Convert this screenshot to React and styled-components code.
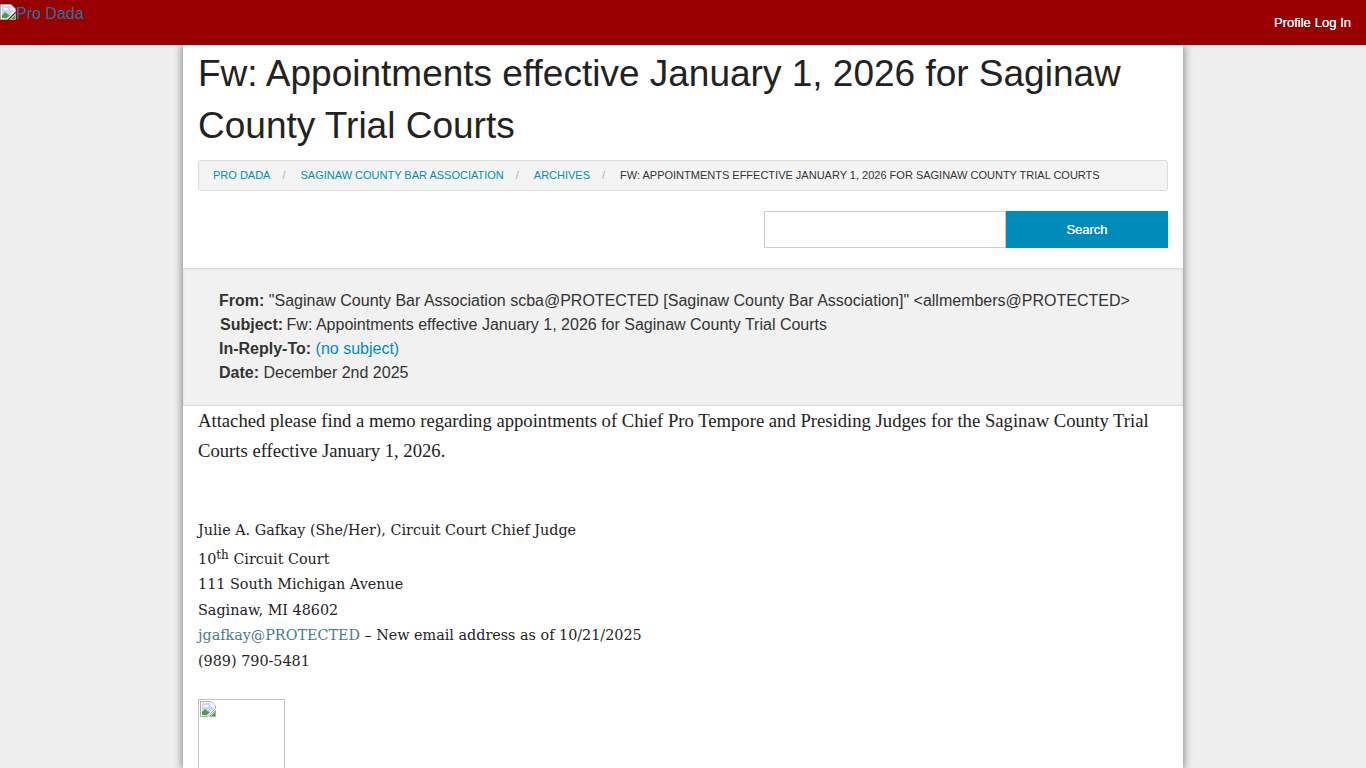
import React from 'react';
import styled, { createGlobalStyle } from 'styled-components';

const GlobalStyle = createGlobalStyle`
	html, body {
		margin: 0;
		padding: 0;
		height: 768px;
		overflow: hidden;
		background: #eeeeee;
		font-family: "Liberation Sans", Arial, sans-serif;
		color: #222222;
	}
	* {
		box-sizing: border-box;
	}
`;

const TopBar = styled.div`
	display: flex;
	justify-content: space-between;
	height: 45px;
	background: #990000;
	position: relative;
	z-index: 2;
`;
const LogoLink = styled.a`
	display: flex;
	align-items: flex-start;
	color: #2f6f9f;
	font-size: 16px;
	line-height: 18px;
	padding-top: 4px;
	text-decoration: none;
`;
const LogoText = styled.span`
	margin-top: 1px;
`;
const NavLinks = styled.div`
	display: flex;
	align-items: center;
	gap: 4px;
	padding-right: 15px;
	color: #ffffff;
	font-size: 13px;
	font-weight: normal;
`;
const NavLink = styled.a`
	color: #ffffff;
	text-shadow: 0 0 0.4px #ffffff;
`;
const Page = styled.div`
	width: 1000px;
	height: 723px;
	margin: 0 auto;
	background: #ffffff;
	box-shadow: 0 0 8px 1px rgba(0, 0, 0, 0.45);
	overflow: hidden;
`;
const Head = styled.div`
	padding: 3px 15px 20px;
`;
const Title = styled.h1`
	margin: 0 0 8px;
	font-size: 37px;
	font-weight: 400;
	line-height: 52px;
	color: #222222;
`;
const Crumbs = styled.ul`
	display: flex;
	align-items: center;
	height: 31px;
	margin: 0 0 20px;
	padding: 0 14px 2px;
	list-style: none;
	background: #f4f4f4;
	border: 1px solid #dcdcdc;
	border-radius: 3px;
	font-size: 11px;
	text-transform: uppercase;
`;
const Crumb = styled.li`
	color: ${(props) => (props.current ? '#333333' : '#008cba')};
`;
const Slash = styled.li`
	width: 30px;
	padding-right: 3px;
	text-align: center;
	color: #aaaaaa;
`;
const SearchRow = styled.div`
	display: flex;
	justify-content: flex-end;
`;
const SearchInput = styled.input`
	width: 242px;
	height: 37px;
	border: 1px solid #cccccc;
	outline: none;
	background: #ffffff;
`;
const SearchButton = styled.a`
	display: flex;
	align-items: center;
	justify-content: center;
	width: 162px;
	height: 37px;
	background: #008cba;
	color: #ffffff;
	font-size: 13px;
	text-shadow: 0 0 0.4px #ffffff;
`;
const Meta = styled.div`
	padding: 20px 36px 21px;
	background: #f1f1f1;
	border-top: 1px solid #dddddd;
	border-bottom: 1px solid #dddddd;
	box-shadow: inset 0 0 3px rgba(0, 0, 0, 0.1);
	font-size: 16px;
	line-height: 24px;
	color: #333333;
	height: 138px;
`;
const MetaLine = styled.div`
	padding-left: ${(props) => props.nudge || 0}px;
	white-space: nowrap;
`;
const MetaLabel = styled.strong`
	margin-right: ${(props) => props.tight || 0}px;
`;
const MetaLink = styled.a`
	color: #008cba;
`;
const Body = styled.div`
	padding: 0 15px;
`;
const Memo = styled.p`
	margin: 0 0 52px;
	font-family: "Liberation Serif", "Times New Roman", serif;
	font-size: 18.67px;
	line-height: 30px;
	color: #222222;
`;
const Signature = styled.div`
	font-family: "DejaVu Serif", serif;
	font-size: 14.35px;
	line-height: 25.6px;
	color: #222222;
`;
const SigLine = styled.div`
	padding-top: ${(props) => (props.raised ? 3 : 0)}px;
	white-space: nowrap;
`;
const Sup = styled.sup`
	font-size: 12px;
	line-height: 1;
	vertical-align: 5px;
`;
const SigLink = styled.a`
	color: #4a7a8c;
`;
const BrokenBox = styled.div`
	width: 87px;
	height: 100px;
	margin-top: 24px;
	padding: 1px;
	border: 1px solid #c0c0c0;
`;

// the browser's missing-image glyph
const BrokenImage = () => (
	<svg width="16" height="16" viewBox="0 0 16 16">
		<path d="M0.5 0.5H11l4.5 4.5v2.5l-8 8h-7z" fill="#ffffff" stroke="#a9a9a9" />
		<path d="M2 2h8.5v4H14v1l-7 7H2z" fill="#c3d6f5" />
		<ellipse cx="6" cy="5" rx="2.5" ry="1.2" fill="#ffffff" />
		<path d="M2 14v-3l3-3 3 2.5 2 0.5-3.5 3.5z" fill="#4fa044" />
		<path d="M9.5 15.5l6-6v6z" fill="#ffffff" stroke="#a9a9a9" />
		<path d="M11 15l4-4v4z" fill="#4fa044" />
	</svg>
);

export default function App() {
	return (
		<>
			<GlobalStyle />
			<TopBar>
				<LogoLink>
					<BrokenImage />
					<LogoText>Pro Dada</LogoText>
				</LogoLink>
				<NavLinks>
					<NavLink>Profile</NavLink>
					<NavLink>Log In</NavLink>
				</NavLinks>
			</TopBar>
			<Page>
				<Head>
					<Title>Fw: Appointments effective January 1, 2026 for Saginaw County Trial Courts</Title>
					<Crumbs>
						<Crumb>Pro Dada</Crumb>
						<Slash>/</Slash>
						<Crumb>Saginaw County Bar Association</Crumb>
						<Slash>/</Slash>
						<Crumb>Archives</Crumb>
						<Slash>/</Slash>
						<Crumb current>Fw: Appointments effective January 1, 2026 for Saginaw County Trial Courts</Crumb>
					</Crumbs>
					<SearchRow>
						<SearchInput />
						<SearchButton>Search</SearchButton>
					</SearchRow>
				</Head>
				<Meta>
					<MetaLine><MetaLabel>From:</MetaLabel> "Saginaw County Bar Association scba@PROTECTED [Saginaw County Bar Association]" &lt;allmembers@PROTECTED&gt;</MetaLine>
					<MetaLine nudge={1}><MetaLabel tight={-1}>Subject:</MetaLabel> Fw: Appointments effective January 1, 2026 for Saginaw County Trial Courts</MetaLine>
					<MetaLine><MetaLabel>In-Reply-To:</MetaLabel> <MetaLink>(no subject)</MetaLink></MetaLine>
					<MetaLine><MetaLabel>Date:</MetaLabel> December 2nd 2025</MetaLine>
				</Meta>
				<Body>
					<Memo>Attached please find a memo regarding appointments of Chief Pro Tempore and Presiding Judges for the Saginaw County Trial Courts effective January 1, 2026.</Memo>
					<Signature>
						<SigLine>Julie A. Gafkay (She/Her), Circuit Court Chief Judge</SigLine>
						<SigLine raised>10<Sup>th</Sup> Circuit Court</SigLine>
						<SigLine>111 South Michigan Avenue</SigLine>
						<SigLine>Saginaw, MI 48602</SigLine>
						<SigLine><SigLink>jgafkay@PROTECTED</SigLink> – New email address as of 10/21/2025</SigLine>
						<SigLine>(989) 790-5481</SigLine>
					</Signature>
					<BrokenBox>
						<BrokenImage />
					</BrokenBox>
				</Body>
			</Page>
		</>
	);
}
